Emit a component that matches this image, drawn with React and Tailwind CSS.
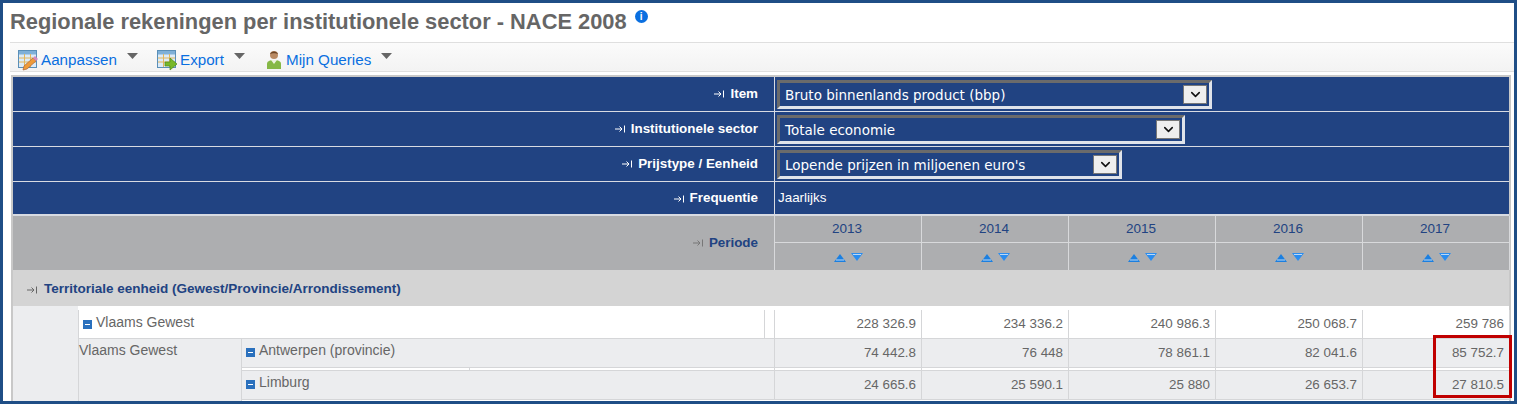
import { ChevronDown } from 'lucide-react';

const years = ['2013', '2014', '2015', '2016', '2017'];
const filters = [
  { label: 'Item', value: 'Bruto binnenlands product (bbp)', width: 'w-[435px]' },
  { label: 'Institutionele sector', value: 'Totale economie', width: 'w-[408px]' },
  { label: 'Prijstype / Eenheid', value: "Lopende prijzen in miljoenen euro's", width: 'w-[345px]' },
];

function PinIcon({ color = '#fff' }) {
  return (
    <svg width="11" height="8" viewBox="0 0 11 8" className="shrink-0" fill="none" stroke={color} strokeWidth="1">
      <path d="M0 4h7M4.5 1.5 7 4 4.5 6.5M9.5 0.5v7" />
    </svg>
  );
}

function Caret() {
  return (
    <svg width="11" height="6" viewBox="0 0 11 6" className="mb-[8px] ml-[10px]">
      <path d="M0 0h11L5.5 6z" fill="#666" />
    </svg>
  );
}

function ToolIcon({ kind }) {
  if (kind === 'user') {
    return (
      <svg width="16" height="20" viewBox="0 0 16 20" className="mr-[2px]">
        <circle cx="8" cy="5" r="4" fill="#b98a63" />
        <path d="M4 4c1-3.500 7-3.500 8 0-2-1-6-1-8 0z" fill="#6b4426" />
        <path d="M1 19v-5c0-3 3-4 7-4s7 1 7 4v5z" fill="#86b846" />
        <path d="M5 10l3 4 3-4z" fill="#eef3e0" />
      </svg>
    );
  }
  return (
    <svg width="21" height="21" viewBox="0 0 21 21">
      <rect x="0.5" y="0.5" width="18" height="17" fill="#dcebf8" stroke="#5a8fb8" />
      <rect x="1" y="1" width="17" height="3.5" fill="#7fb0d8" />
      <path d="M1 8h17M1 12h17M6.500 4v13M12.500 4v13" stroke="#e4b65c" strokeWidth="1" />
      {kind === 'edit' ? (
        <>
          <path d="M5 20l1-4 9-8 3 3-9 8z" fill="#ef9b3a" stroke="#a8643a" strokeWidth="0.7" />
          <path d="M15 8l2-2 3 3-2 2z" fill="#d58ac0" />
        </>
      ) : (
        <path d="M8 12h5V8l7 6-7 6v-4H8z" fill="#77b82a" stroke="#4e8a1a" strokeWidth="0.7" />
      )}
    </svg>
  );
}

function ToolItem({ kind, label, className }) {
  return (
    <div className={`flex items-center ${className}`}>
      <ToolIcon kind={kind} />
      <span className="ml-[2px] text-[15.2px] text-[#0a6fe0]">{label}</span>
      <Caret />
    </div>
  );
}

function FilterRow({ label, value, width }) {
  return (
    <div className="flex h-[35px] border-b border-[#d8dbe2]">
      <div className="flex w-[762px] shrink-0 items-center justify-end gap-[5px] border-r border-[#d8dbe2] pr-[16px] text-[13.4px] font-bold text-white">
        <PinIcon />
        {label}
      </div>
      <div className="flex items-center pl-[2px]">
        <div className={`flex h-[29px] items-center justify-between border-t-[3px] border-r-[3px] border-b-[3px] border-l-[3px] border-t-[#6b6b6b] border-r-[#dfe3ea] border-b-[#dfe3ea] border-l-[#6b6b6b] pr-[2px] pl-[5px] ${width}`}>
          <span className="pt-[2px] font-['DejaVu_Sans'] text-[13.5px] text-white">{value}</span>
          <span className="flex h-[19px] w-[24px] items-center justify-center border border-[#777] bg-[#eeeeee]">
            <ChevronDown size={15} strokeWidth={2.5} color="#111" />
          </span>
        </div>
      </div>
    </div>
  );
}

function SortArrows() {
  return (
    <div className="flex items-center justify-center gap-[5px] pl-[1px]">
      <svg width="12" height="8" viewBox="0 0 12 8">
        <path d="M6 0l6 8H0z" fill="#1b7fe0" />
        <path d="M2 6h8" stroke="#bcd9f5" strokeWidth="1" />
      </svg>
      <svg width="12" height="8" viewBox="0 0 12 8" className="mb-[3px]">
        <path d="M0 0h12L6 8z" fill="#2a8df0" />
        <path d="M2 1.500h8" stroke="#bcd9f5" strokeWidth="1" />
      </svg>
    </div>
  );
}

function Minus() {
  return (
    <span className="mt-[8px] mr-[4px] flex h-[9px] w-[9px] shrink-0 items-center justify-center bg-[#2a70bd]">
      <span className="h-[1px] w-[5px] bg-white" />
    </span>
  );
}

function Values({ data }) {
  return data.map((v, i) => (
    <div key={i} className="flex w-[147px] shrink-0 items-center justify-end border-r border-[#d5d6d8] pr-[5px] text-[13.4px]">
      {v}
    </div>
  ));
}

function DataRow({ label, data }) {
  return (
    <div className="flex h-[29px] border-b border-[#d5d6d8] bg-[#ecedef]">
      <div className="flex w-[533px] shrink-0 items-start border-r border-[#d5d6d8] pt-[1px] pl-[4px]">
        <Minus />
        {label}
      </div>
      <Values data={data} />
    </div>
  );
}

function GapRow() {
  return (
    <div className="flex h-[3px] border-b border-[#d5d6d8] bg-white">
      <div className="w-[228px] shrink-0 border-r border-[#d5d6d8]" />
      <div className="w-[305px] shrink-0 border-r border-[#d5d6d8]" />
      {years.map((y) => (
        <div key={y} className="w-[147px] shrink-0 border-r border-[#d5d6d8]" />
      ))}
    </div>
  );
}

export default function App() {
  return (
    <div className="h-[404px] w-[1517px] overflow-hidden border-t-[3px] border-r-[3px] border-b-[3px] border-l-[3px] border-[#1f4e86] bg-white font-['Liberation_Sans',Arial,sans-serif] text-[#666]">
      {/* Title */}
      <div className="flex h-[39px] items-start pt-[6px] pl-[7px]">
        <h1 className="text-[21.85px] leading-[26px] font-bold text-[#666]">
          Regionale rekeningen per institutionele sector - NACE 2008
        </h1>
        <span className="mt-[1px] ml-[8px] flex h-[13px] w-[13px] items-center justify-center rounded-full bg-[#0a6fe0] text-[10px] leading-none font-bold text-white">i</span>
      </div>

      {/* Toolbar */}
      <div className="ml-[7px] flex h-[30px] items-center border-t border-b border-[#dfdfdf] bg-gradient-to-b from-[#fbfbfb] to-[#f3f3f3] pt-[6px] pl-[8px]">
        <ToolItem kind="edit" label="Aanpassen" className="w-[139px]" />
        <ToolItem kind="export" label="Export" className="w-[109px]" />
        <ToolItem kind="user" label="Mijn Queries" className="" />
      </div>

      {/* Table */}
      <div className="mt-[3px] ml-[8px] w-[1500px] border-t-[2px] border-r-[2px] border-l-[2px] border-[#c8c8c8]">
        <div className="bg-[#214382]">
          {filters.map((f) => (
            <FilterRow key={f.label} {...f} />
          ))}
          <div className="flex h-[34px] border-b-[2px] border-[#d8dbe2]">
            <div className="flex w-[762px] shrink-0 items-center justify-end gap-[5px] border-r border-[#d8dbe2] pt-[1px] pr-[16px] text-[13.4px] font-bold text-white">
              <PinIcon />
              Frequentie
            </div>
            <div className="flex items-center pt-[1px] pl-[3px] text-[13.4px] text-white">Jaarlijks</div>
          </div>
        </div>

        {/* Periode header */}
        <div className="flex h-[54px] bg-[#adaeb0]">
          <div className="flex w-[762px] shrink-0 items-center justify-end gap-[5px] border-r border-[#d8d9db] pr-[16px] text-[13.4px] font-bold text-[#214382]">
            <PinIcon color="#777" />
            Periode
          </div>
          {years.map((y) => (
            <div key={y} className="flex w-[147px] shrink-0 flex-col border-r border-[#d8d9db]">
              <div className="flex h-[27px] items-center justify-center border-b border-[#d8d9db] pr-[2px] text-[13.5px] text-[#214382]">{y}</div>
              <div className="flex flex-1 items-center justify-center pt-[3px]"><SortArrows /></div>
            </div>
          ))}
        </div>

        {/* Territoriale eenheid */}
        <div className="flex h-[36px] items-center gap-[6px] bg-[#d4d4d4] pt-[3px] pl-[14px] text-[13.5px] font-bold text-[#214382]">
          <PinIcon color="#666" />
          Territoriale eenheid (Gewest/Provincie/Arrondissement)
        </div>

        {/* Data */}
        <div className="flex text-[14px]">
          <div className="h-[95px] w-[65px] shrink-0 bg-[#ecedef]" />
          <div className="flex-1 pt-[4px]">
            <div className="flex h-[29px] border-b border-[#d5d6d8] bg-white">
              <div className="flex w-[686px] shrink-0 items-start border-l border-[#d5d6d8] pt-[2px] pl-[4px]">
                <Minus />
                Vlaams Gewest
              </div>
              <div className="w-[11px] shrink-0 border-x border-[#d5d6d8]" />
              <Values data={['228 326.9', '234 336.2', '240 986.3', '250 068.7', '259 786']} />
            </div>
            <div className="flex">
              <div className="h-[62px] w-[164px] shrink-0 border-r border-l border-[#d5d6d8] bg-[#ecedef] pt-[1px]">Vlaams Gewest</div>
              <div>
                <DataRow label="Antwerpen (provincie)" data={['74 442.8', '76 448', '78 861.1', '82 041.6', '85 752.7']} />
                <GapRow />
                <DataRow label="Limburg" data={['24 665.6', '25 590.1', '25 880', '26 653.7', '27 810.5']} />
              </div>
            </div>
          </div>
        </div>
      </div>

      {/* Highlight */}
      <div className="absolute top-[335px] left-[1433px] h-[63px] w-[79px] border-[3px] border-[#c00000]" />
    </div>
  );
}
